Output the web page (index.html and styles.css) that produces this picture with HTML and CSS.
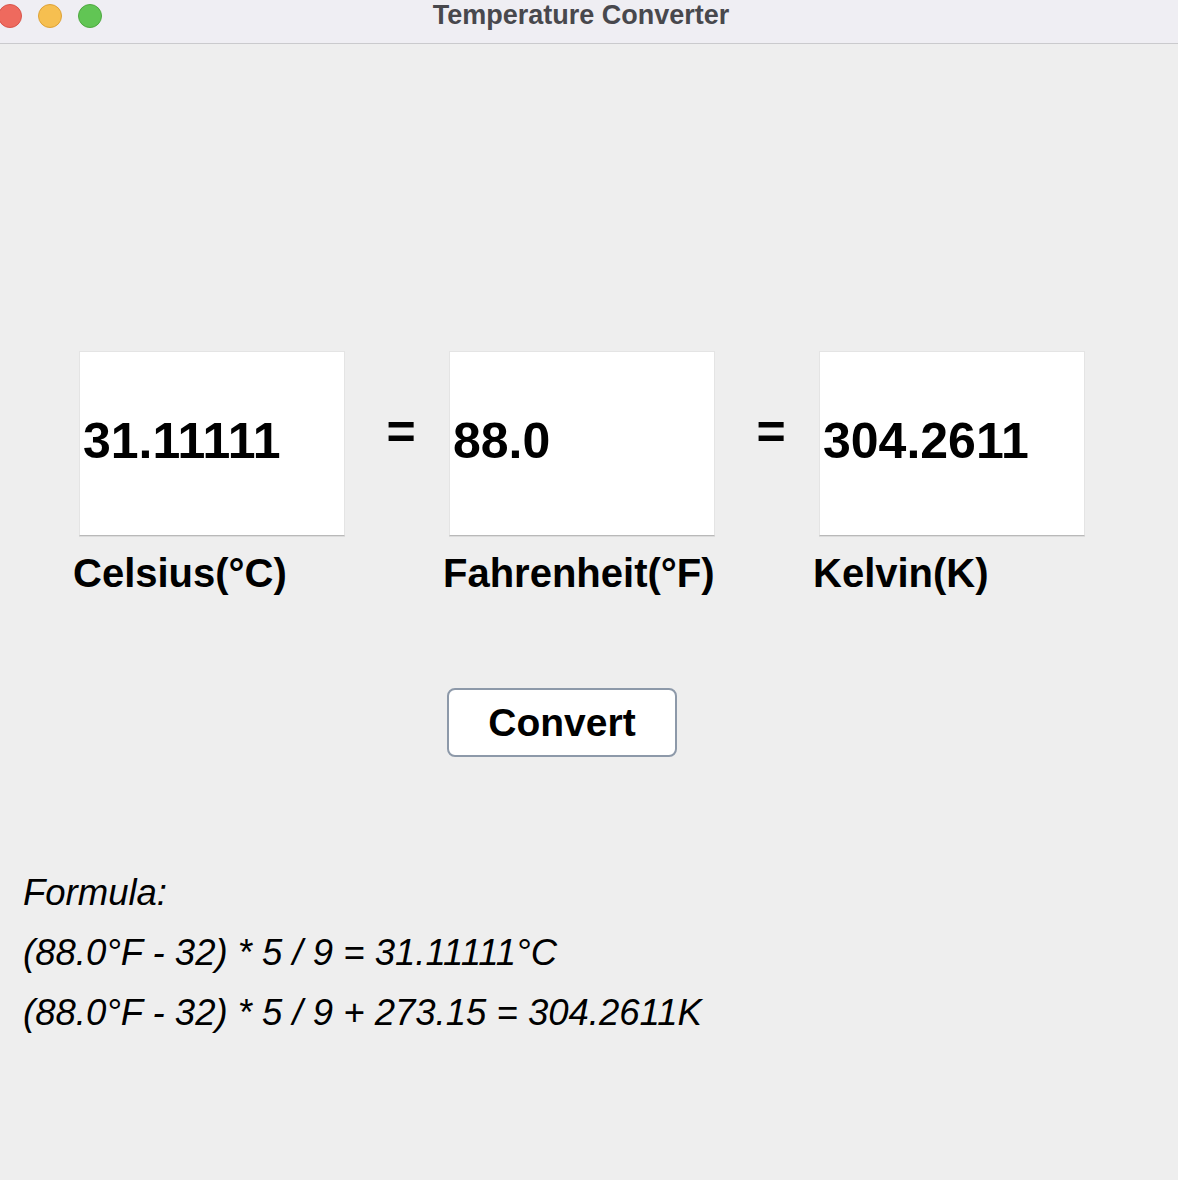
FILE: index.html
```html
<!DOCTYPE html>
<html lang="en">
<head>
<meta charset="utf-8">
<title>Temperature Converter</title>
<link rel="stylesheet" href="styles.css">
</head>
<body>
<div class="window">
  <header class="titlebar">
    <div class="lights">
      <span class="light red"></span>
      <span class="light yellow"></span>
      <span class="light green"></span>
    </div>
    <div class="title">Temperature Converter</div>
  </header>
  <main class="content">
    <div class="fields">
      <div class="field">
        <div class="box">31.11111</div>
        <div class="label">Celsius(°C)</div>
      </div>
      <div class="eq">=</div>
      <div class="field">
        <div class="box">88.0</div>
        <div class="label">Fahrenheit(°F)</div>
      </div>
      <div class="eq">=</div>
      <div class="field">
        <div class="box">304.2611</div>
        <div class="label">Kelvin(K)</div>
      </div>
    </div>
    <div class="actions">
      <button class="convert" type="button">Convert</button>
    </div>
    <div class="formula">
      <div class="fline">Formula:</div>
      <div class="fline">(88.0°F - 32) * 5 / 9 = 31.11111°C</div>
      <div class="fline">(88.0°F - 32) * 5 / 9 + 273.15 = 304.2611K</div>
    </div>
  </main>
</div>
</body>
</html>
```
FILE: styles.css
```css
* { box-sizing: border-box; }
html, body {
  margin: 0;
  padding: 0;
  background: #eeeeee;
}
body {
  font-family: "Liberation Sans", Arial, sans-serif;
  color: #000;
  width: 1178px;
  height: 1180px;
  overflow: hidden;
}
.window {
  display: flex;
  flex-direction: column;
  height: 100%;
}
.titlebar {
  position: relative;
  height: 44px;
  background: #efeef3;
  border-bottom: 1px solid #cacacd;
  display: flex;
  align-items: center;
  justify-content: center;
}
.lights {
  position: absolute;
  left: -2px;
  top: 4px;
  display: flex;
  gap: 16px;
}
.light {
  width: 24px;
  height: 24px;
  border-radius: 50%;
  display: block;
}
.red { background: #ee6a5e; border: 1px solid #d9544a; }
.yellow { background: #f6bf50; border: 1px solid #dea236; }
.green { background: #61c554; border: 1px solid #4ea83f; }
.title {
  font-size: 27px;
  font-weight: bold;
  color: #48484d;
  margin-right: 16px;
  margin-top: -12px;
}
.content {
  flex: 1;
  display: flex;
  flex-direction: column;
}
.fields {
  display: flex;
  align-items: flex-start;
  margin-top: 307px;
  padding-left: 79px;
}
.field {
  width: 266px;
  display: flex;
  flex-direction: column;
}
.box {
  height: 185px;
  background: #ffffff;
  border: 1px solid #e4e4e4;
  border-bottom: 1px solid #b9b9b9;
  box-shadow: 0 1px 0 #dcdcdc;
  display: flex;
  align-items: center;
  padding: 0 0 6px 3px;
  font-size: 50px;
  font-weight: bold;
  line-height: 1;
}
.label {
  margin-top: 17px;
  margin-left: -6px;
  font-size: 40px;
  font-weight: bold;
  line-height: 1;
  white-space: nowrap;
}
.eq {
  width: 104px;
  text-align: center;
  font-size: 50px;
  font-weight: bold;
  line-height: 1;
  padding-top: 56px;
  padding-left: 8px;
}
.actions {
  display: flex;
  padding-left: 447px;
  margin-top: 95px;
}
.convert {
  width: 230px;
  height: 69px;
  background: #ffffff;
  border: 2px solid #8d99a9;
  border-radius: 8px;
  font-family: "Liberation Sans", Arial, sans-serif;
  font-size: 39px;
  font-weight: bold;
  color: #000;
  padding: 0;
  line-height: 1;
}
.formula {
  margin-top: 106px;
  padding-left: 23px;
  font-size: 36.5px;
  font-style: italic;
  line-height: 60px;
}
.fline {
  white-space: nowrap;
}
```
